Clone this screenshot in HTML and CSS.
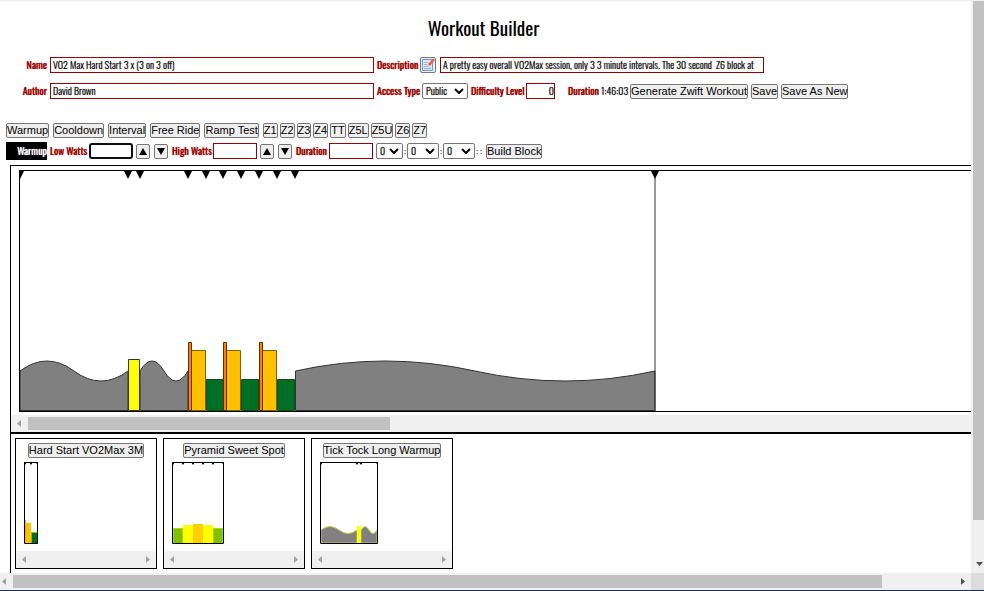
FILE: index.html
```html
<!DOCTYPE html>
<html lang="en">
<head>
<meta charset="utf-8">
<title>Workout Builder</title>
<link rel="stylesheet" href="styles.css">
</head>
<body>
<div class="window">
  <main class="page">
    <h1>Workout Builder</h1>

    <form class="details">
      <div class="line">
        <label class="lead" for="name">Name</label>
        <input class="wide" id="name" value="VO2 Max Hard Start 3 x (3 on 3 off)">
        <label class="label-m" for="description">Description</label>
        <button class="edit" type="button" aria-label="Edit description">
          <svg width="14" height="14" viewBox="0 0 14 14"><path d="M1.500 1.500h10v11h-10z" fill="#dbe9fb" stroke="#6f95cf"/><path d="M3 4.500h4M3 6.500h3M3 8.500h3M3 10.500h7" stroke="#8fb2e3"/><path d="M6 9l1-3 5-5.500 2 1.500-5 6z" fill="#e8623f"/><path d="M6 9l1-3 2 2z" fill="#f4d7b2"/></svg>
        </button>
        <input class="wide" id="description" value="A pretty easy overall VO2Max session, only 3 3 minute intervals. The 30 second  Z6 block at">
      </div>
      <div class="line">
        <label class="lead" for="author">Author</label>
        <input class="wide" id="author" value="David Brown">
        <label class="label-a" for="access">Access Type</label>
        <div class="pick access"><select id="access"><option>Public</option></select><svg width="10" height="6"><path d="M1 1l4 4 4-4"/></svg></div>
        <label class="label-l" for="level">Difficulty Level</label>
        <input class="level" id="level" value="0">
        <span class="duration-label">Duration</span>
        <span class="time">1:46:03</span>
        <button type="button">Generate Zwift Workout</button>
        <button type="button">Save</button>
        <button type="button">Save As New</button>
      </div>
    </form>

    <div class="toolbar">
      <div class="blocks">
        <button>Warmup</button><button>Cooldown</button><button>Interval</button><button>Free Ride</button><button>Ramp Test</button>
      </div>
      <div class="zones">
        <button>Z1</button><button>Z2</button><button>Z3</button><button>Z4</button><button>TT</button><button>Z5L</button><button>Z5U</button><button>Z6</button><button>Z7</button>
      </div>
    </div>

    <form class="block-form">
      <strong class="kind">Warmup</strong>
      <label class="label-s" for="low">Low Watts</label>
      <input class="watts active" id="low">
      <div class="steps">
        <button type="button" aria-label="Raise low watts"><svg width="8" height="7" viewBox="0 0 8 7"><path d="M4 0l4 7H0z"/></svg></button>
        <button type="button" aria-label="Lower low watts"><svg width="8" height="7" viewBox="0 0 8 7"><path d="M0 0h8L4 7z"/></svg></button>
      </div>
      <label class="label-h" for="high">High Watts</label>
      <input class="watts" id="high">
      <div class="steps">
        <button type="button" aria-label="Raise high watts"><svg width="8" height="7" viewBox="0 0 8 7"><path d="M4 0l4 7H0z"/></svg></button>
        <button type="button" aria-label="Lower high watts"><svg width="8" height="7" viewBox="0 0 8 7"><path d="M0 0h8L4 7z"/></svg></button>
      </div>
      <label class="label-d" for="length">Duration</label>
      <input class="watts" id="length">
      <div class="clock">
        <div class="pick hours"><select aria-label="Hours"><option>0</option></select><svg width="10" height="6"><path d="M1 1l4 4 4-4"/></svg></div><span>:</span>
        <div class="pick"><select aria-label="Minutes"><option>0</option></select><svg width="10" height="6"><path d="M1 1l4 4 4-4"/></svg></div><span>:</span>
        <div class="pick"><select aria-label="Seconds"><option>0</option></select><svg width="10" height="6"><path d="M1 1l4 4 4-4"/></svg></div><span class="colons">: :</span>
      </div>
      <button type="button">Build Block</button>
    </form>

    <section class="workspace">
      <div class="chart">
        <svg width="100%" height="240">
          <g stroke="#333" stroke-width="1">
            <path fill="#808080" d="M0 239.500V200Q27 180 54 200T108 200V239.500z"/>
            <path fill="#ff0" d="M108.500 188.500h11v51h-11z"/>
            <path fill="#808080" d="M120 239.500V200Q132 180 144 200T168 200V239.500z"/>
            <g id="set">
              <path fill="#ffc000" stroke="#7a6010" d="M171.500 179.500h14v60h-14z"/>
              <path fill="#ff8000" stroke="#5c2e00" d="M168.500 171.500h3v68h-3z"/>
              <path fill="#006f26" stroke="#124d20" d="M186.500 208.500h17v31h-17z"/>
            </g>
            <use href="#set" x="35"/>
            <use href="#set" x="71"/>
            <path fill="#808080" d="M275.500 239.500V200Q365 180 455 200T635 200V239.500z"/>
            <path d="M635 0v240" fill="none"/>
          </g>
          <path d="M-4 0h8l-4 8zM104 0h8l-4 8zM116 0h8l-4 8zM164 0h8l-4 8zM182 0h8l-4 8zM199 0h8l-4 8zM217 0h8l-4 8zM235 0h8l-4 8zM253 0h8l-4 8zM271 0h8l-4 8zM631 0h8l-4 8z"/>
        </svg>
      </div>
      <div class="scroll chart-scroll">
        <svg width="17" height="17"><path d="M10 5v7L6 8.500z" fill="#a3a3a3"/></svg>
        <div class="thumb"></div>
      </div>

      <div class="library">
        <article class="card">
          <button>Hard Start VO2Max 3M</button>
          <svg class="thumbnail" width="14" height="82">
            <path fill="#ffc000" d="M1 58h1v3h5v20H1z"/><path fill="#ff9d00" d="M1 58h1v23H1z"/>
            <path fill="#006f26" stroke="#8fc400" d="M7.500 70.500h6v11h-6z"/>
            <path d="M0 0h3L1 3zM5 0h4L7 3zM11 0h3v3z"/><path d="M.5.5h13v81H.5z" fill="none" stroke="#000"/>
          </svg>
          <div class="scroll"><svg width="17" height="17"><path d="M10 5v7L6 8.500z" fill="#a3a3a3"/></svg><svg width="17" height="17"><path d="M7 5v7l4-3.500z" fill="#a3a3a3"/></svg></div>
        </article>
        <article class="card">
          <button>Pyramid Sweet Spot</button>
          <svg class="thumbnail" width="52" height="82">
            <path fill="#80c000" stroke="#a5d800" d="M1.500 66.500h9v15h-9zM41.500 66.500h9v15h-9z"/>
            <path fill="#ff0" d="M11 63h30v18H11z"/><path fill="#ffd000" d="M21 62h10v19H21z"/>
            <path d="M0 0h3L1 3zM9 0h4l-2 3zM19 0h4l-2 3zM29 0h4l-2 3zM39 0h4l-2 3zM49 0h3v3z"/><path d="M.5.5h51v81H.5z" fill="none" stroke="#000"/>
          </svg>
          <div class="scroll"><svg width="17" height="17"><path d="M10 5v7L6 8.500z" fill="#a3a3a3"/></svg><svg width="17" height="17"><path d="M7 5v7l4-3.500z" fill="#a3a3a3"/></svg></div>
        </article>
        <article class="card">
          <button>Tick Tock Long Warmup</button>
          <svg class="thumbnail" width="58" height="82">
            <path fill="#808080" stroke="#c8c84a" d="M1 81V68Q10 61 19 68T37 68V81zM41 81V68Q45 61 49 68T57 68V81z"/>
            <path fill="#ff0" d="M37 64h4v17h-4z"/>
            <path d="M0 0h3L1 3zM35 0h4l-2 3zM39 0h4l-2 3zM55 0h3v3z"/><path d="M.5.5h57v81H.5z" fill="none" stroke="#000"/>
          </svg>
          <div class="scroll"><svg width="17" height="17"><path d="M10 5v7L6 8.500z" fill="#a3a3a3"/></svg><svg width="17" height="17"><path d="M7 5v7l4-3.500z" fill="#a3a3a3"/></svg></div>
        </article>
      </div>
    </section>
  </main>

  <div class="page-scroll-y"><div class="thumb"></div><svg width="11" height="17"><path d="M3 6h7L6.500 10z" fill="#505050"/></svg></div>
  <div class="scroll page-scroll-x">
    <svg width="13" height="17"><path d="M6 5v7L2 8.500z" fill="#a3a3a3"/></svg>
    <div class="thumb"></div>
    <svg class="end" width="17" height="17"><path d="M7 5v7l4-3.500z" fill="#505050"/></svg>
  </div>
  <div class="corner"></div>
</div>
</body>
</html>
```
FILE: styles.css
```css
* { box-sizing: border-box; }
body {
  margin: 0;
  background: #fff;
  color: #000;
  font: 300 10px/14px Oswald, "Liberation Sans Narrow", "Liberation Sans", sans-serif;
}
svg { display: block; flex: none; }
.window {
  display: grid;
  grid-template: minmax(0, 1fr) 17px / minmax(0, 1fr) 13px;
  height: 100vh;
  border-top: 1px solid #eee;
  border-bottom: 1px solid #1c3058;
}
.page {
  display: flex;
  flex-direction: column;
  min-height: 0;
  overflow: hidden;
}
h1 {
  margin: 12px 4px 16px 0;
  font-size: 19px;
  font-weight: 400;
  line-height: 28px;
  text-align: center;
}
button {
  flex: none;
  height: 15px;
  margin: 0;
  padding: 0;
  border: 1px solid #767676;
  border-radius: 2px;
  background: #efefef;
  color: #000;
  font: 11px/13px "Liberation Sans", sans-serif;
  white-space: nowrap;
}
input {
  height: 16px;
  margin: 0;
  padding: 0 2px 1px;
  border: 1px solid #900;
  background: #fff;
  color: #000;
  font: inherit;
}
input, .pick select, .time { text-shadow: 0 0 1px #0009; }
.pick { position: relative; width: 32px; height: 16px; }
.pick select {
  display: block;
  width: 100%;
  height: 16px;
  margin: 0;
  padding: 0 3px;
  appearance: none;
  border: 1px solid #767676;
  border-radius: 2px;
  background: #fff;
  color: #000;
  font: inherit;
  line-height: 14px;
}
.pick svg {
  position: absolute;
  top: 5px;
  right: 4px;
  fill: none;
  stroke: #000;
  stroke-width: 2;
  pointer-events: none;
}
label, .duration-label {
  flex: none;
  color: #900;
  font-weight: 400;
  text-shadow: 0 0 1px currentColor;
  white-space: nowrap;
}
.details {
  display: flex;
  flex-direction: column;
  gap: 10px;
}
.line, .block-form {
  display: flex;
  align-items: center;
  gap: 3px;
  height: 16px;
}
.lead { width: 47px; text-align: right; }
.wide { width: 324px; }
.label-m { width: 40px; }
.label-a { width: 42px; }
.label-l { width: 52px; }
.edit {
  width: 16px;
  height: 16px;
  margin-right: 1px;
}
.access { width: 46px; }
.level { width: 29px; margin-right: 10px; padding: 0 0 1px; text-align: right; }
.duration-label { width: 30px; }
.time { width: 26px; }

.toolbar {
  display: flex;
  gap: 4px;
  margin: 24px 0 4px 6px;
}
.blocks { display: flex; gap: 4px; }
.zones { display: flex; gap: 2px; }
.block-form { height: 18px; padding-left: 6px; }
.kind {
  width: 41px;
  height: 18px;
  background: #000;
  color: #fff;
  font-weight: 400;
  line-height: 18px;
  text-align: right;
  text-shadow: 0 0 1px currentColor;
}
.label-s { width: 36px; }
.label-h { width: 38px; }
.label-d { width: 30px; }
.watts { width: 44px; }
.active {
  border: 2px solid #101010;
  border-radius: 3px;
}
.steps { display: flex; gap: 4px; margin-right: 1px; }
.steps button {
  display: grid;
  place-items: center;
  width: 14px;
}
.clock { display: flex; align-items: center; }
.clock .hours { width: 27px; }
.clock span { width: 4px; text-align: center; }
.clock .colons { width: 8px; }

.workspace {
  flex: 1;
  margin: 5px 0 0 10px;
  border: solid #000;
  border-width: 1px 0 0 1px;
}
.chart {
  margin: 4px 0 3px 8px;
  border: solid #000;
  border-width: 1px 0 1px 1px;
}
.scroll {
  display: flex;
  justify-content: space-between;
  align-items: center;
  height: 17px;
  background: #f0f0f0;
}
.thumb { height: 13px; background: #c1c1c1; }
.chart-scroll { justify-content: flex-start; }
.chart-scroll .thumb { width: 37.7%; }
.library {
  display: flex;
  gap: 6px;
  padding: 4px;
  border-top: 2px solid #000;
}
.card {
  display: flex;
  flex-direction: column;
  align-items: center;
  width: 142px;
  height: 131px;
  padding-top: 4px;
  border: 1px solid #000;
}
.thumbnail { align-self: flex-start; margin: 4px 0 7px 8px; }
.card .scroll { width: 100%; }
.page-scroll-y {
  display: flex;
  flex-direction: column;
  justify-content: space-between;
  padding-left: 2px;
  background: #f0f0f0;
}
.page-scroll-y .thumb { height: 90.7%; }
.page-scroll-x .thumb { width: 89.5%; }
.page-scroll-x { justify-content: flex-start; }
.page-scroll-x .end { margin-left: auto; }
.corner { background: #dcdcdc; }
```
